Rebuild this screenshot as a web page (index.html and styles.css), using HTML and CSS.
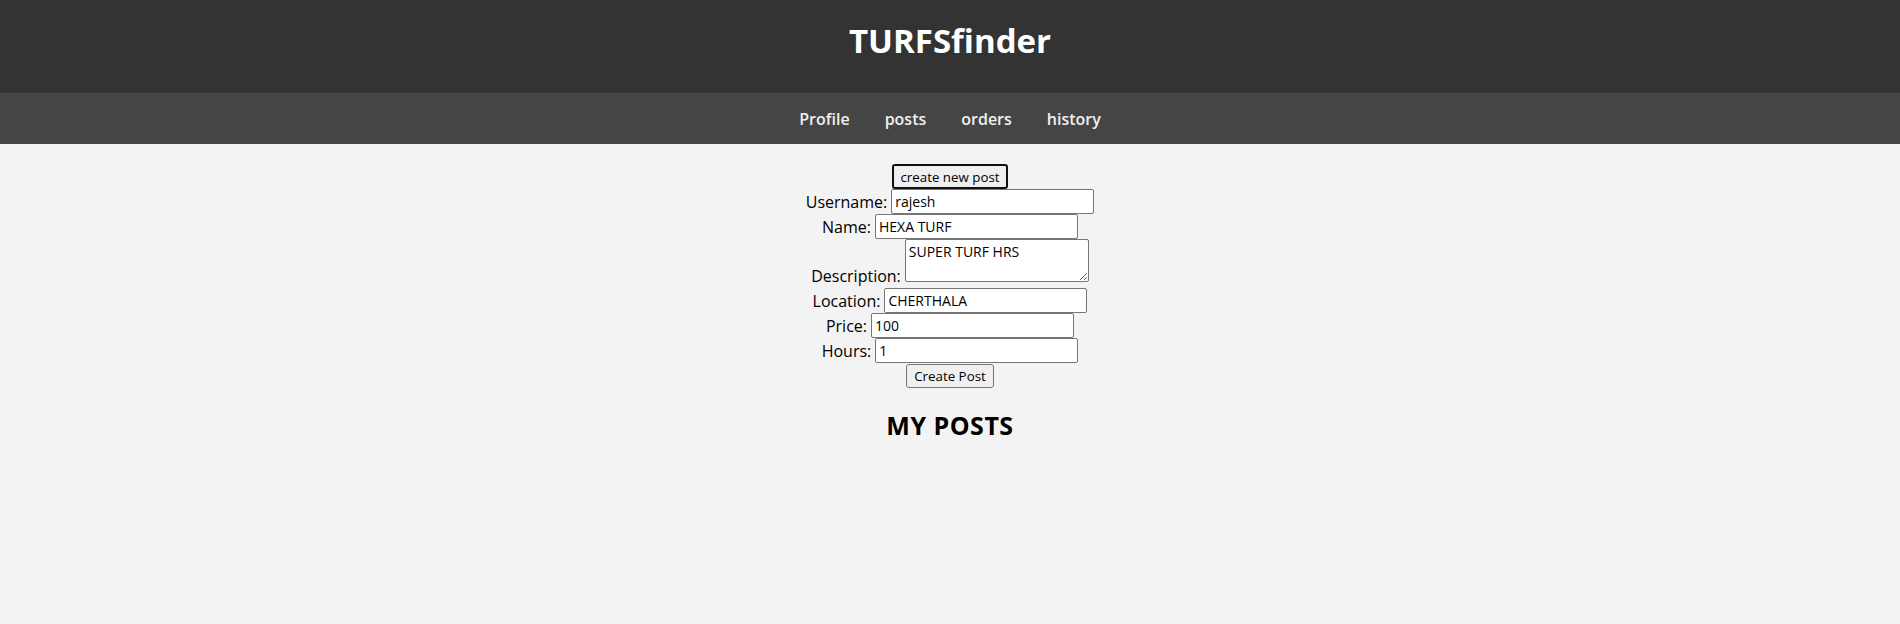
FILE: index.html
```html
<!DOCTYPE html>
<html>
<head>
<meta charset="utf-8">
<title>TURFSfinder</title>
<link rel="stylesheet" href="styles.css">
</head>
<body>
<header class="site-header">
  <h1 class="brand">TURFSfinder</h1>
</header>
<nav class="main-nav">
  <a class="nav-link" href="#">Profile</a>
  <a class="nav-link" href="#">posts</a>
  <a class="nav-link" href="#">orders</a>
  <a class="nav-link" href="#">history</a>
</nav>
<main class="content">
  <form class="post-form">
    <div class="row"><button type="button" class="btn btn-new">create new post</button></div>
    <div class="row"><label class="lbl">Username:</label><input class="field" type="text" value="rajesh"></div>
    <div class="row"><label class="lbl">Name:</label><input class="field" type="text" value="HEXA TURF"></div>
    <div class="row row-area"><label class="lbl lbl-area">Description:</label><textarea class="area">SUPER TURF HRS</textarea></div>
    <div class="row"><label class="lbl">Location:</label><input class="field" type="text" value="CHERTHALA"></div>
    <div class="row"><label class="lbl">Price:</label><input class="field" type="text" value="100"></div>
    <div class="row"><label class="lbl">Hours:</label><input class="field" type="text" value="1"></div>
    <div class="row"><button type="button" class="btn btn-create">Create Post</button></div>
  </form>
  <h2 class="section-title">MY POSTS</h2>
</main>
</body>
</html>
```
FILE: styles.css
```css
html, body {
  margin: 0;
  padding: 0;
}
body {
  background: #f3f3f3;
  font-family: "Comic Sans MS", "Open Sans", sans-serif;
  color: #000;
  height: 624px;
}
.site-header {
  background: #333333;
  height: 93px;
  display: flex;
  align-items: center;
  justify-content: center;
}
.brand {
  margin: 0 0 13px 0;
  color: #ffffff;
  font-size: 33px;
  font-weight: 700;
}
.main-nav {
  background: #454545;
  height: 51px;
  display: flex;
  justify-content: center;
  align-items: center;
  gap: 35px;
}
.nav-link {
  color: #f0f0f0;
  text-decoration: none;
  font-weight: 600;
  font-size: 16px;
}
.content {
  display: flex;
  flex-direction: column;
  align-items: center;
  padding-top: 20px;
}
.post-form {
  display: flex;
  flex-direction: column;
  align-items: center;
}
.row {
  display: flex;
  justify-content: center;
  align-items: center;
  gap: 4px;
  height: 25px;
}
.row-area {
  height: 49px;
  align-items: flex-end;
}
.lbl {
  font-size: 16px;
  font-weight: 500;
  line-height: 20px;
}
.lbl-area {
  margin-bottom: 2px;
}
.field {
  box-sizing: border-box;
  width: 203px;
  height: 25px;
  font-family: inherit;
  font-size: 14px;
  padding: 1px 3px;
  border: 1px solid #767676;
  border-radius: 2px;
  background: #fff;
  color: #000;
}
.area {
  box-sizing: border-box;
  width: 184px;
  height: 43px;
  margin-bottom: 6px;
  font-family: inherit;
  font-size: 14px;
  padding: 2px 3px;
  border: 1px solid #767676;
  border-radius: 2px;
  background: #fff;
  color: #000;
  resize: both;
}
.btn {
  box-sizing: border-box;
  height: 25px;
  font-family: inherit;
  font-size: 13.33px;
  background: #efefef;
  color: #000;
  padding: 1px 6px;
  border-radius: 3px;
}
.btn-new {
  width: 116px;
  border: 2px solid #101010;
}
.btn-create {
  width: 88px;
  height: 24px;
  border: 1px solid #767676;
}
.section-title {
  margin: 20px 0 0 0;
  font-size: 25px;
  font-weight: 700;
  letter-spacing: 0.5px;
}
```
